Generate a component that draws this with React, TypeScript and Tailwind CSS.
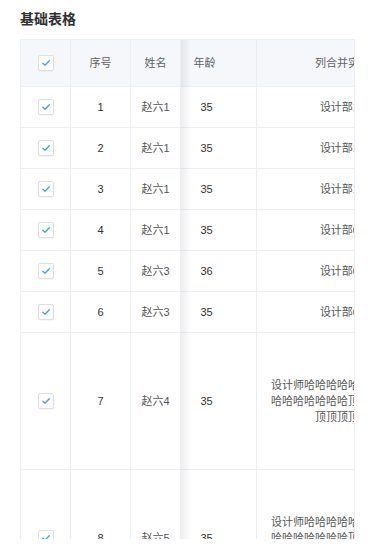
import React from "react";

const font = { fontFamily: '"Liberation Sans", "Noto Sans CJK SC", sans-serif' };

function Check() {
  return (
    <div className="w-4 h-4 rounded-[2px] border border-[#dcdfe6] bg-white flex items-center justify-center shadow-[0_1px_1px_rgba(0,0,0,0.04)]">
      <svg width="10" height="10" viewBox="0 0 10 10" fill="none">
        <path d="M1.8 5.2 L4 7.2 L8.3 2.8" stroke="#409eff" strokeWidth="1.3" strokeLinecap="round" strokeLinejoin="round" />
      </svg>
    </div>
  );
}

type Row = { id: number; name: string; age: number; text: string; tall?: boolean };

const longText = "设计师" + "哈".repeat(20) + "顶".repeat(17);

const rows: Row[] = [
  { id: 1, name: "赵六1", age: 35, text: "设计部12号工位" },
  { id: 2, name: "赵六1", age: 35, text: "设计部12号工位" },
  { id: 3, name: "赵六1", age: 35, text: "设计部12号工位" },
  { id: 4, name: "赵六1", age: 35, text: "设计部06号工位" },
  { id: 5, name: "赵六3", age: 36, text: "设计部06号工位" },
  { id: 6, name: "赵六3", age: 35, text: "设计部06号工位" },
  { id: 7, name: "赵六4", age: 35, text: longText, tall: true },
  { id: 8, name: "赵六5", age: 35, text: longText, tall: true },
];

export default function App() {
  return (
    <div className="bg-white min-h-[554px] w-[368px] pl-5 pr-[13px]" style={font}>
      <div className="pt-[9px] h-[39px] text-[14px] leading-[20px] font-bold text-[#303133]">基础表格</div>
      <div className="relative h-[500px] overflow-hidden border-t border-l border-r border-[#ebeef5]">
        <div className="w-[441px]">
          <div className="flex h-[47px] bg-[#f5f7fa] border-b border-[#ebeef5] text-[11px] text-[#606266]">
            <div className="w-[50px] shrink-0 border-r border-[#ebeef5] flex items-center justify-center">
              <Check />
            </div>
            <div className="w-[60px] shrink-0 border-r border-[#ebeef5] flex items-center justify-center">序号</div>
            <div className="w-[50px] shrink-0 border-r border-[#ebeef5] flex items-center justify-center">姓名</div>
            <div className="w-[76px] shrink-0 border-r border-[#ebeef5] flex items-center justify-center pr-[28px]">年龄</div>
            <div className="w-[208px] shrink-0 flex items-center justify-center pl-[14px] pr-[18px] whitespace-nowrap">列合并实例的描述</div>
          </div>
          {rows.map((r) => (
            <div
              key={r.id}
              className={`flex border-b border-[#ebeef5] text-[11px] text-[#333] bg-white ${r.tall ? "h-[137px]" : "h-[41px]"}`}
            >
              <div className="w-[50px] shrink-0 border-r border-[#ebeef5] flex items-center justify-center">
                <Check />
              </div>
              <div className="w-[60px] shrink-0 border-r border-[#ebeef5] flex items-center justify-center">{r.id}</div>
              <div className="w-[50px] shrink-0 border-r border-[#ebeef5] flex items-center justify-center text-[#555]">{r.name}</div>
              <div className="w-[76px] shrink-0 border-r border-[#ebeef5] flex items-center justify-center pr-[24px]">{r.age}</div>
              <div className="w-[208px] shrink-0 flex items-center justify-center pl-[14px] pr-[18px] text-center leading-[16px] text-[#555]">
                <span className="break-all">{r.text}</span>
              </div>
            </div>
          ))}
        </div>
        <div className="absolute top-0 bottom-0 left-[160px] w-[10px] bg-gradient-to-r from-[rgba(0,0,0,0.07)] to-transparent pointer-events-none" />
      </div>
    </div>
  );
}
